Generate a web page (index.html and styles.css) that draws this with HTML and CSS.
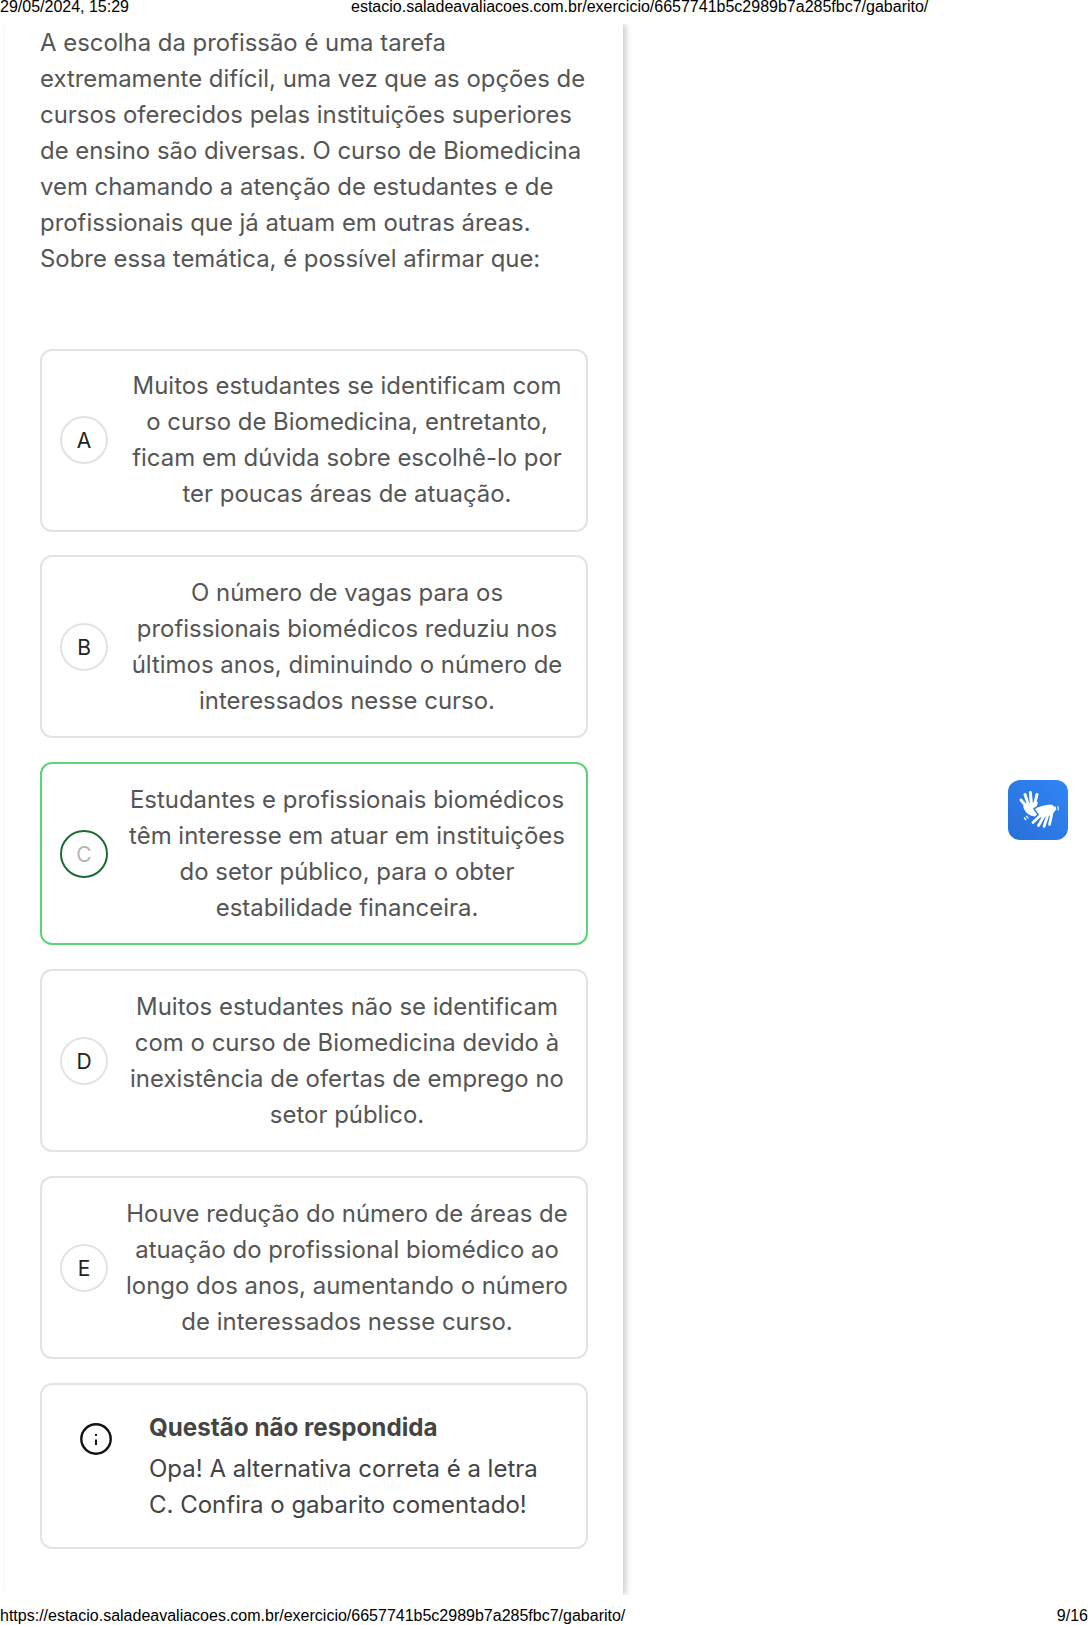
FILE: index.html
```html
<!DOCTYPE html>
<html lang="pt-BR">
<head>
<meta charset="utf-8">
<title>Gabarito</title>
<link rel="stylesheet" href="styles.css">
</head>
<body>
<header class="print-head">
  <span>29/05/2024, 15:29</span>
  <span class="print-title">estacio.saladeavaliacoes.com.br/exercicio/6657741b5c2989b7a285fbc7/gabarito/</span>
</header>
<main class="panel">
  <p class="question">A escolha da profissão é uma tarefa<br>extremamente difícil, uma vez que as opções de<br>cursos oferecidos pelas instituições superiores<br>de ensino são diversas. O curso de Biomedicina<br>vem chamando a atenção de estudantes e de<br>profissionais que já atuam em outras áreas.<br>Sobre essa temática, é possível afirmar que:</p>
  <ul class="options">
    <li class="option"><span class="letter">A</span><span class="option-text">Muitos estudantes se identificam com<br>o curso de Biomedicina, entretanto,<br>ficam em dúvida sobre escolhê-lo por<br>ter poucas áreas de atuação.</span></li>
    <li class="option"><span class="letter">B</span><span class="option-text">O número de vagas para os<br>profissionais biomédicos reduziu nos<br>últimos anos, diminuindo o número de<br>interessados nesse curso.</span></li>
    <li class="option correct"><span class="letter">C</span><span class="option-text">Estudantes e profissionais biomédicos<br>têm interesse em atuar em instituições<br>do setor público, para o obter<br>estabilidade financeira.</span></li>
    <li class="option"><span class="letter">D</span><span class="option-text">Muitos estudantes não se identificam<br>com o curso de Biomedicina devido à<br>inexistência de ofertas de emprego no<br>setor público.</span></li>
    <li class="option"><span class="letter">E</span><span class="option-text">Houve redução do número de áreas de<br>atuação do profissional biomédico ao<br>longo dos anos, aumentando o número<br>de interessados nesse curso.</span></li>
  </ul>
  <section class="notice">
    <svg class="info" viewBox="0 0 32 32" aria-hidden="true"><circle cx="16" cy="16" r="14.7" fill="none" stroke="#111" stroke-width="2.4"/><rect x="15" y="16.5" width="2" height="5.5" fill="#111"/><rect x="15" y="11" width="2" height="2" fill="#111"/></svg>
    <div>
      <h2 class="notice-title">Questão não respondida</h2>
      <p class="notice-text">Opa! A alternativa correta é a letra<br>C. Confira o gabarito comentado!</p>
    </div>
  </section>
</main>
<div class="vlibras" aria-label="Acessibilidade em Libras">
  <svg viewBox="0 0 60 60" aria-hidden="true">
    <g class="hand-left">
      <path class="hand-fill" d="M15.5 24 L30 22 L28.5 27 Q31 28 35 26 L36 28 L27 36.5 Q19 36 15.5 28 Z"/>
      <path class="finger" d="M13 20 L18.5 26.5 M17 14.5 L20.5 25 M22.3 12.5 L23.5 24 M29 14.5 L26.5 25"/>
    </g>
    <g class="hand-right">
      <path class="hand-outline" d="M27 29 Q33 25 43 24.5 Q48 26 47 31 L43 35.5 L33 37.5 Z"/>
      <path class="hand-fill" d="M27 29 Q33 25 43 24.5 Q48 26 47 31 L43 35.5 L33 37.5 Z"/>
      <path class="finger" d="M33 35 L25 42.5 M36 36 L30.5 45.5 M39.5 36 L36 46.5 M44 33 L41.5 44.5"/>
    </g>
    <path class="tick" d="M47.2 26.5 L47.7 30.5 M49.8 26.3 L50.3 30.3 M16 37.5 L18.2 40 M18.2 35.8 L20.4 38.3"/>
  </svg>
</div>
<footer class="print-foot">
  <span>https://estacio.saladeavaliacoes.com.br/exercicio/6657741b5c2989b7a285fbc7/gabarito/</span>
  <span>9/16</span>
</footer>
</body>
</html>
```
FILE: styles.css
```css
* { box-sizing: border-box; }
html, body { margin: 0; padding: 0; background: #fff; }
body { width: 1088px; height: 1625px; overflow: hidden; display: flex; flex-direction: column; position: relative; font-family: Inter, sans-serif; color: #555; }
.print-head, .print-foot { font: 16px/14px "Liberation Sans", Arial, sans-serif; color: #000; display: flex; flex: none; position: relative; z-index: 1; background: #fff; }
.print-head { height: 24px; }
.print-title { margin-left: 222px; }
.print-foot { height: 30px; justify-content: space-between; align-items: center; padding-top: 12px; }
.panel { flex: 1; width: 618px; margin-left: 5px; padding: 0 0 0 35px; background: #fff; box-shadow: 3px 0 6px rgba(0, 0, 0, .2); }
.question { margin: 0; font-size: 23.9px; line-height: 36px; height: 324.5px; padding-top: 1px; white-space: nowrap; }
.options { list-style: none; margin: 0; padding: 0; display: flex; flex-direction: column; gap: 23.9px; }
.option { display: flex; align-items: center; width: 548px; height: 183px; padding: 0 18px; border: 2px solid #e3e3e3; border-radius: 12px; }
.option.correct { border-color: #5cd47a; }
.letter { flex: none; width: 48px; height: 48px; display: flex; align-items: center; justify-content: center; padding-top: 1px; border: 2px solid #e3e3e3; border-radius: 50%; font-size: 21px; color: #222; }
.correct .letter { border-color: #1b6b34; color: #b5b5b5; }
.option-text { flex: 1; text-align: center; font-size: 23.95px; line-height: 36px; margin-left: 18px; white-space: nowrap; }
.notice { display: flex; align-items: flex-start; width: 548px; height: 166px; margin-top: 24px; padding: 27px 20px 0 38px; border: 2px solid #e3e3e3; border-radius: 12px; color: #444; }
.info { flex: none; width: 32px; height: 32px; margin-top: 11px; }
.notice > div { margin-left: 37px; }
.notice-title { margin: 0 0 8px; font-size: 24.2px; line-height: 31px; font-weight: 700; }
.notice-text { margin: 0; font-size: 24px; line-height: 36px; font-weight: 400; }
.vlibras { position: absolute; left: 1008px; top: 780px; width: 60px; height: 60px; border-radius: 12px; background: linear-gradient(45deg, #2a6fd8, #2f86f6); }
.vlibras svg { display: block; width: 60px; height: 60px; }
.hand-fill { fill: #fff; }
.hand-outline { fill: none; stroke: #2d7ae6; stroke-width: 3; }
.finger { fill: none; stroke: #fff; stroke-width: 3; stroke-linecap: round; }
.hand-right .finger { stroke-width: 2.8; }
.tick { fill: none; stroke: #fff; stroke-width: 1.2; }
```
